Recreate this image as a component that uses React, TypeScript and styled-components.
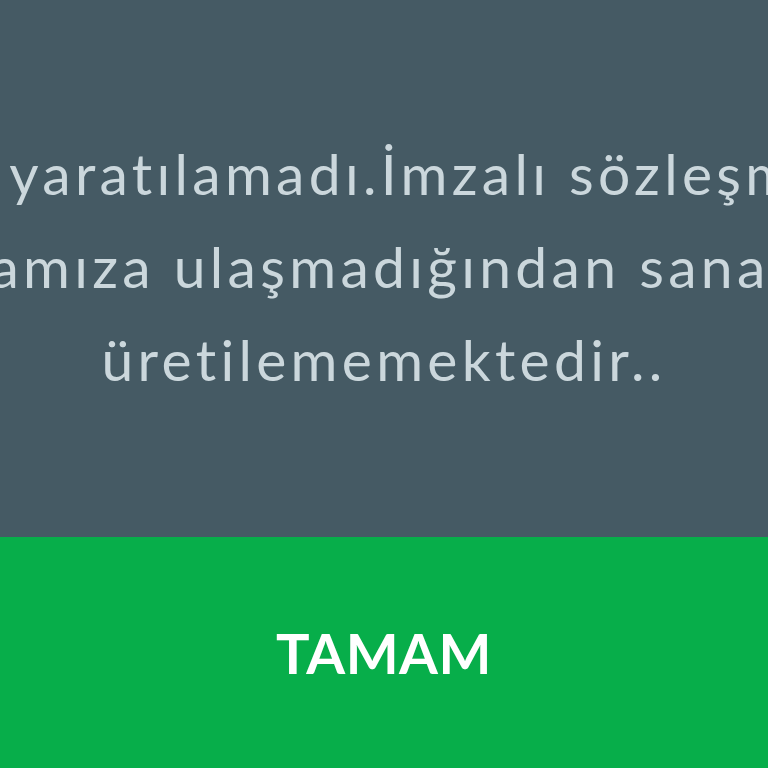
import React from "react";
import styled, { createGlobalStyle } from "styled-components";

const Global = createGlobalStyle`
  html, body { margin: 0; padding: 0; height: 100%; overflow: hidden; background: #455a64; }
  #root { height: 100%; }
`;

const Screen = styled.div`
  height: 768px;
  width: 768px;
  display: flex;
  flex-direction: column;
  overflow: hidden;
  font-family: Lato, "Noto Sans", sans-serif;
`;

const MessagePanel = styled.div`
  height: 537px;
  flex: none;
  background: #455a64;
  display: flex;
  flex-direction: column;
  align-items: center;
  padding-top: 127px;
  box-sizing: border-box;
  overflow: hidden;
`;

const Line = styled.div<{ $shift?: number }>`
  white-space: nowrap;
  color: #cbd7dc;
  font-size: 57px;
  line-height: 93px;
  letter-spacing: 4.3px;
  transform: translateX(${(p) => p.$shift ?? 0}px);
`;

const OkButton = styled.button`
  flex: 1;
  border: none;
  margin: 0;
  background: #07ae4a;
  color: #ffffff;
  font-family: Lato, "Noto Sans", sans-serif;
  font-weight: 700;
  font-size: 56px;
  letter-spacing: 0.5px;
  display: flex;
  align-items: center;
  justify-content: center;
  padding: 0;
`;

export default function App() {
  return (
    <>
      <Global />
      <Screen>
        <MessagePanel>
          <Line $shift={-126}>Sanal kartınız yaratılamadı.İmzalı sözleşmeniz</Line>
          <Line $shift={3}>bankamıza ulaşmadığından sanal kart</Line>
          <Line>üretilememektedir..</Line>
        </MessagePanel>
        <OkButton>TAMAM</OkButton>
      </Screen>
    </>
  );
}
